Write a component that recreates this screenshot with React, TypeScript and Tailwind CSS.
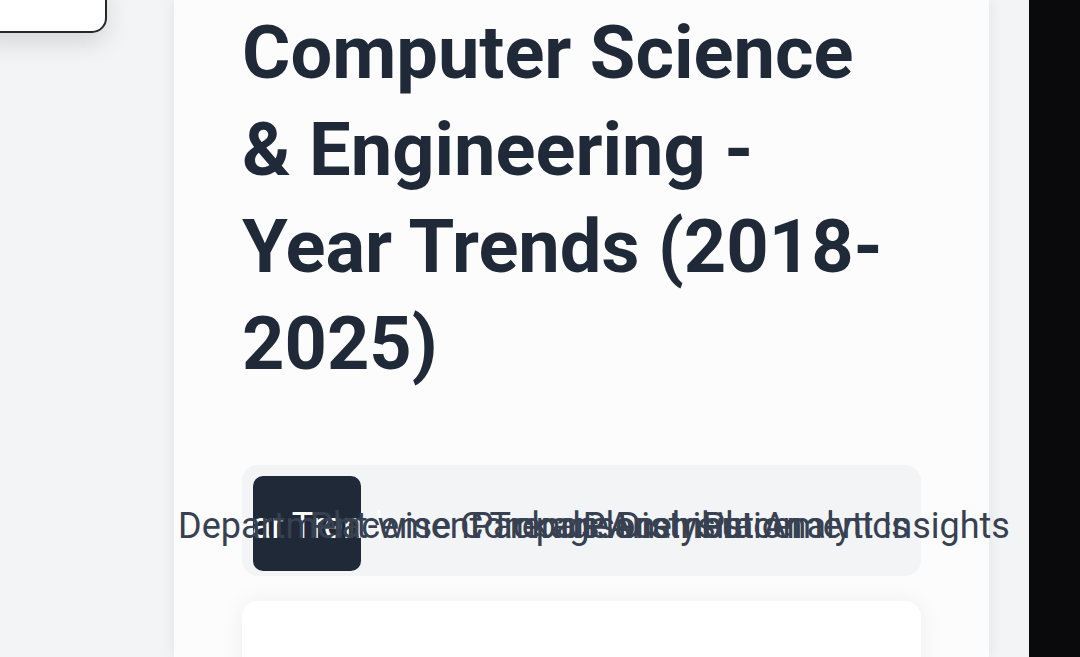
import React from "react";

const tabs = [
  "Year Trends",
  "Department-wise Comparison",
  "Placement Trends Analysis",
  "Package Distribution",
  "Placement Analytics",
  "Placement Insights",
];

export default function App() {
  return (
    <div
      className="relative flex h-[657px] w-[1080px] overflow-hidden bg-[#f3f4f6]"
      style={{ fontFamily: "Roboto, 'Noto Sans', sans-serif" }}
    >
      <div className="absolute left-[-20px] top-[-20px] z-10 h-[53px] w-[127px] rounded-br-[15px] border-2 border-[#23272e] bg-white shadow-[0_10px_24px_rgba(0,0,0,0.12)]" />
      <div className="w-[174px] shrink-0" />
      <main className="flex w-[815px] shrink-0 flex-col bg-[#fcfcfc] px-[68px] pt-[4px] shadow-[0_0_14px_rgba(0,0,0,0.08)]">
        <h1 className="w-[660px] shrink-0 text-[74px] font-bold leading-[97px] text-[#1f2937]">
          Computer Science &amp; Engineering - Year Trends (2018-2025)
        </h1>
        <div className="mt-[73px] h-[111px] shrink-0 rounded-[16px] bg-[#f3f4f6] px-[11px] pt-[11px]">
          <div className="grid grid-cols-6 gap-[2px]">
            {tabs.map((t, i) => (
              <div
                key={t}
                className={
                  i === 0
                    ? "flex h-[95px] items-center justify-center whitespace-nowrap rounded-[10px] bg-[#1f2937] pt-[5px] text-[36px] text-white"
                    : "flex h-[95px] items-center justify-center whitespace-nowrap rounded-[10px] pt-[5px] text-[36px] text-[#374151]"
                }
              >
                {t}
              </div>
            ))}
          </div>
        </div>
        <div className="mt-[25px] h-[200px] shrink-0 rounded-[16px] bg-white shadow-[0_0_24px_rgba(0,0,0,0.06)]" />
      </main>
      <div className="w-[40px] shrink-0" />
      <div className="flex-1 bg-[#0a0a0c]" />
    </div>
  );
}
